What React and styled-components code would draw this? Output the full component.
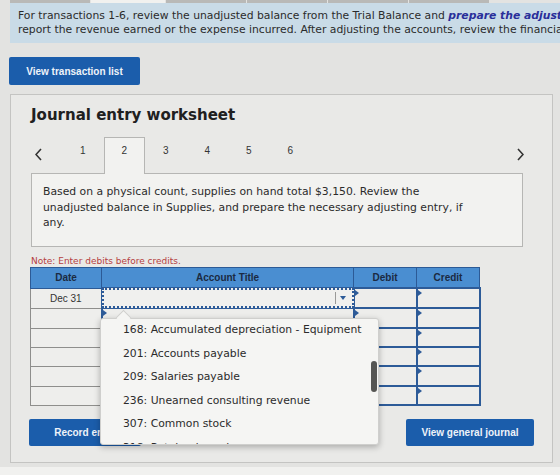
import React from 'react';
import styled, { createGlobalStyle } from 'styled-components';

const Global = createGlobalStyle`
  html, body { margin: 0; padding: 0; }
  body {
    background: #e3e3e1;
    font-family: "DejaVu Sans", Verdana, sans-serif;
    color: #2a2a2a;
  }
`;

const Page = styled.div`
  width: 560px;
  height: 475px;
  overflow: hidden;
  display: flex;
  flex-direction: column;
`;

const TabStrip = styled.div`
  display: flex;
  height: 3px;
  padding-left: 10px;
`;

const StripTab = styled.div`
  width: ${(p) => p.$w}px;
  background: ${(p) => (p.$on ? '#f1f1ef' : '#b9b9b7')};
  margin-right: 1px;
`;

const InfoBox = styled.div`
  margin-left: 10px;
  height: 40px;
  box-sizing: border-box;
  padding: 6px 0 0 8px;
  background: #c9dbe7;
  font-size: 10.8px;
  line-height: 14px;
  white-space: nowrap;
  overflow: hidden;
  color: #2b2b2b;
`;

const Emph = styled.span`
  font-weight: bold;
  font-style: italic;
  color: #2a2f9a;
`;

const TopActions = styled.div`
  padding: 14px 0 0 9px;
`;

const BlueButton = styled.button`
  width: ${(p) => p.$w || 128}px;
  height: ${(p) => p.$h || 27}px;
  border: none;
  border-radius: 2px;
  background: #1b5dab;
  color: #eef3f9;
  font-family: "Liberation Sans", Arial, sans-serif;
  font-weight: bold;
  font-size: 10px;
  padding: 0;
  cursor: pointer;
`;

const Panel = styled.section`
  margin: 9px 0 0 10px;
  width: 543px;
  height: 369px;
  box-sizing: border-box;
  border: 1px solid #c4c4c2;
  background: #e9e9e7;
  padding: 0 18px 0 20px;
`;

const Title = styled.h2`
  margin: 10px 0 0 0;
  font-size: 15px;
  line-height: 20px;
  font-weight: bold;
  color: #202020;
`;

const TabsRow = styled.div`
  margin-top: 12px;
  width: 498px;
  height: 36px;
  display: flex;
  align-items: stretch;
`;

const Arrow = styled.div`
  width: ${(p) => p.$w}px;
  padding-top: 9px;
  padding-left: ${(p) => p.$pl || 0}px;
  box-sizing: border-box;
  margin-left: ${(p) => (p.$end ? 'auto' : '0')};
`;

const StepTab = styled.div`
  width: 41.5px;
  box-sizing: border-box;
  text-align: center;
  padding-top: 8px;
  font-family: "Liberation Sans", Arial, sans-serif;
  font-size: 10px;
  line-height: 12px;
  color: #333;
  position: relative;
  z-index: 1;
  ${(p) =>
    p.$active &&
    `
    background: #f2f2f0;
    border: 1px solid #b6b6b4;
    border-bottom: none;
    margin-bottom: -1px;
    padding-top: 7px;
  `}
`;

const Prompt = styled.div`
  width: 492px;
  height: 74px;
  box-sizing: border-box;
  border: 1px solid #b6b6b4;
  background: #f2f2f0;
  padding: 10px 49px 0 11px;
  font-size: 10.8px;
  line-height: 15.5px;
  color: #2b2b2b;
`;

const Note = styled.div`
  margin-top: 8px;
  font-size: 9px;
  line-height: 12px;
  color: #b5403f;
`;

const TableWrap = styled.div`
  position: relative;
  margin-left: -1px;
  width: 449px;
`;

const Sheet = styled.table`
  border-collapse: collapse;
  table-layout: fixed;
  width: 449px;
  font-family: "Liberation Sans", Arial, sans-serif;
  font-size: 10px;
`;

const Head = styled.th`
  height: 19px;
  padding: 0;
  background: #4a8ed1;
  border: 1px solid #2c5a96;
  color: #1b2a42;
  font-weight: bold;
  text-align: center;
`;

const Row = styled.tr`
  height: ${(p) => p.$h}px;
`;

const DateCell = styled.td`
  padding: 0;
  border: 1px solid #8e8e8c;
  background: #eeeeec;
  text-align: center;
  color: #333;
`;

const EntryCell = styled.td`
  padding: 0;
  border: 2px solid #2d5b98;
  background: #ededeb;
  position: relative;
  &::before {
    content: '';
    position: absolute;
    left: 0;
    top: 1px;
    border-left: 4px solid #2d5b98;
    border-top: 3px solid transparent;
    border-bottom: 3px solid transparent;
  }
`;

const SelectBox = styled.div`
  position: absolute;
  inset: -1px;
  border: 2px dotted #2d5b98;
  background: #f0f0ee;
  display: flex;
  justify-content: flex-end;
  align-items: center;
`;

const Caret = styled.div`
  width: 14px;
  height: 12px;
  border-left: 1px solid #9a9a98;
  margin-right: 2px;
  display: flex;
  align-items: center;
  justify-content: center;
  &::after {
    content: '';
    border-top: 4px solid #2d5b98;
    border-left: 3px solid transparent;
    border-right: 3px solid transparent;
  }
`;

const Menu = styled.div`
  position: absolute;
  left: 70px;
  top: 51px;
  width: 279px;
  height: 127px;
  box-sizing: border-box;
  background: #f5f5f3;
  border: 1px solid #cfcfcd;
  border-radius: 3px;
  box-shadow: 0 2px 6px rgba(0, 0, 0, 0.28);
  z-index: 5;
  &::before {
    content: '';
    position: absolute;
    left: 17px;
    top: -7px;
    width: 10px;
    height: 10px;
    background: #f5f5f3;
    border-left: 1px solid #cfcfcd;
    border-top: 1px solid #cfcfcd;
    transform: rotate(45deg);
  }
`;

const MenuList = styled.ul`
  list-style: none;
  margin: 0;
  padding: 0;
  height: 100%;
  overflow: hidden;
  position: relative;
`;

const MenuItem = styled.li`
  height: 23.5px;
  line-height: 21px;
  padding-left: 22px;
  font-size: 10.8px;
  color: #2b2b2b;
  white-space: nowrap;
`;

const Thumb = styled.div`
  position: absolute;
  right: 1px;
  top: 42px;
  width: 6px;
  height: 31px;
  border-radius: 3px;
  background: #555553;
`;

const BottomActions = styled.div`
  margin: 13px 0 0 -2px;
  display: flex;
  justify-content: space-between;
`;

const Floor = styled.div`
  flex: 1;
  margin-top: 4px;
  background: #f1f1ef;
`;

function Chevron({ dir }) {
  const pts = dir === 'left' ? '6,1 1,6.5 6,12' : '1,1 6,6.5 1,12';
  return (
    <svg width="7" height="13" viewBox="0 0 7 13">
      <polyline points={pts} fill="none" stroke="#333" strokeWidth="1.6" />
    </svg>
  );
}

const accounts = [
  '168: Accumulated depreciation - Equipment',
  '201: Accounts payable',
  '209: Salaries payable',
  '236: Unearned consulting revenue',
  '307: Common stock',
  '318: Retained earnings',
  '319: Dividends',
];

const rowHeights = [20, 20, 19, 19, 20, 19];

export default function App() {
  return (
    <Page>
      <Global />
      <TabStrip>
        <StripTab $w={80} />
        <StripTab $w={74} $on />
        <StripTab $w={80} />
        <StripTab $w={80} />
        <StripTab $w={80} />
        <StripTab $w={80} />
      </TabStrip>
      <InfoBox>
        For transactions 1-6, review the unadjusted balance from the Trial Balance and{' '}
        <Emph>prepare the adjusting entries</Emph> needed. Then,
        <br />
        report the revenue earned or the expense incurred. After adjusting the accounts, review the financial statements.
      </InfoBox>
      <TopActions>
        <BlueButton $w={131} $h={28}>View transaction list</BlueButton>
      </TopActions>
      <Panel>
        <Title>Journal entry worksheet</Title>
        <TabsRow>
          <Arrow $w={31} $pl={4}>
            <Chevron dir="left" />
          </Arrow>
          {[1, 2, 3, 4, 5, 6].map((n) => (
            <StepTab key={n} $active={n === 2}>
              {n}
            </StepTab>
          ))}
          <Arrow $w={12} $end>
            <Chevron dir="right" />
          </Arrow>
        </TabsRow>
        <Prompt>
          Based on a physical count, supplies on hand total $3,150. Review the unadjusted balance in Supplies, and
          prepare the necessary adjusting entry, if any.
        </Prompt>
        <Note>Note: Enter debits before credits.</Note>
        <TableWrap>
          <Sheet>
            <colgroup>
              <col style={{ width: 71 }} />
              <col style={{ width: 252 }} />
              <col style={{ width: 63 }} />
              <col style={{ width: 63 }} />
            </colgroup>
            <thead>
              <tr>
                <Head>Date</Head>
                <Head>Account Title</Head>
                <Head>Debit</Head>
                <Head>Credit</Head>
              </tr>
            </thead>
            <tbody>
              {rowHeights.map((h, i) => (
                <Row key={i} $h={h}>
                  <DateCell>{i === 0 ? 'Dec 31' : ''}</DateCell>
                  <EntryCell>
                    {i === 0 && (
                      <SelectBox>
                        <Caret />
                      </SelectBox>
                    )}
                  </EntryCell>
                  <EntryCell />
                  <EntryCell />
                </Row>
              ))}
            </tbody>
          </Sheet>
          <Menu>
            <MenuList>
              {accounts.map((a) => (
                <MenuItem key={a}>{a}</MenuItem>
              ))}
            </MenuList>
            <Thumb />
          </Menu>
        </TableWrap>
        <BottomActions>
          <BlueButton $w={112}>Record entry</BlueButton>
          <BlueButton>View general journal</BlueButton>
        </BottomActions>
      </Panel>
      <Floor />
    </Page>
  );
}
